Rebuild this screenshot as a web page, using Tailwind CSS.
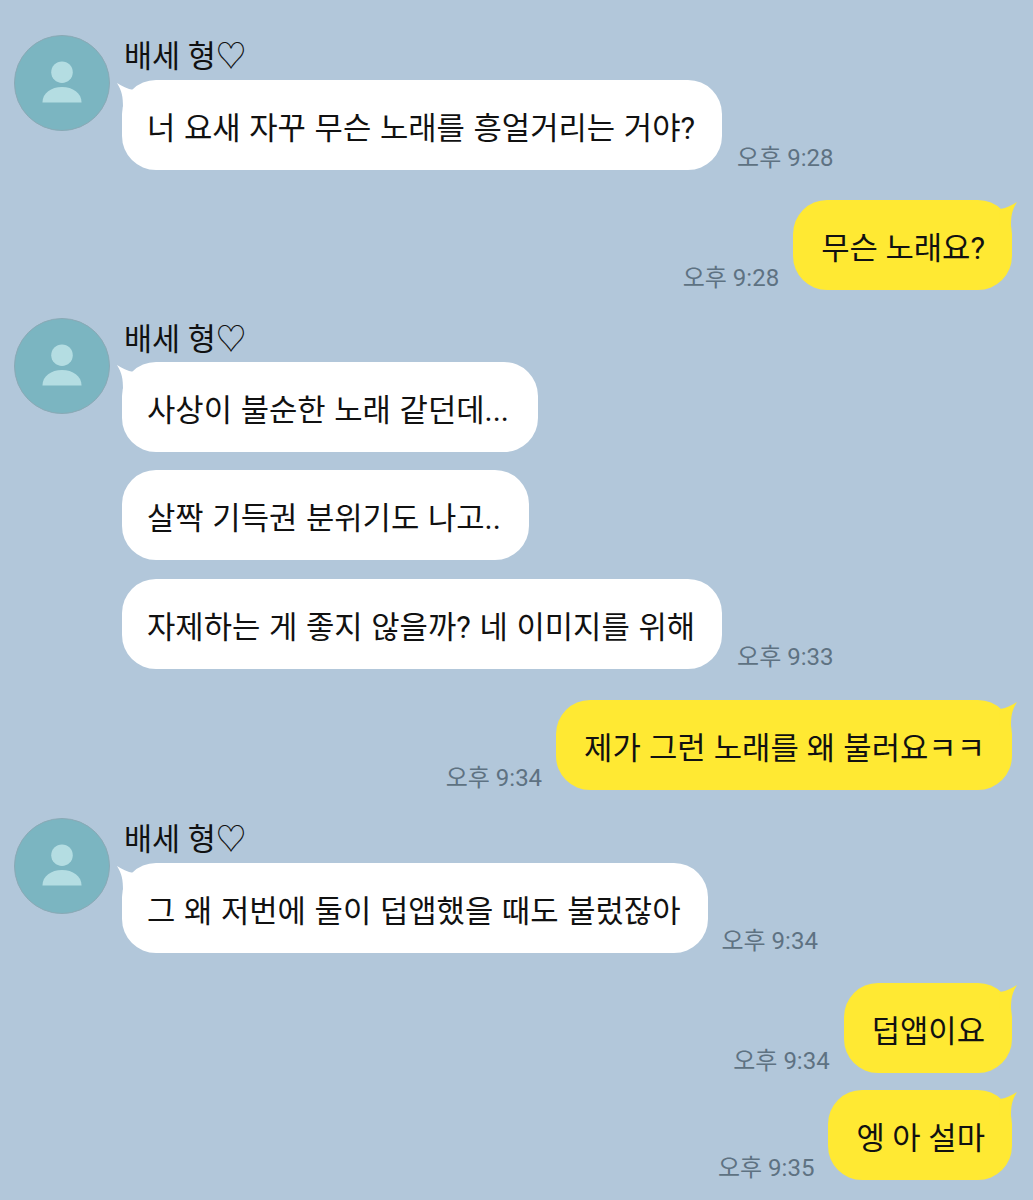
<!DOCTYPE html>
<html lang="ko">
<head>
  <meta charset="UTF-8">
  <meta name="viewport" content="width=device-width, initial-scale=1.0">
  <title>채팅</title>
  <script src="https://cdn.jsdelivr.net/npm/@tailwindcss/browser@4"></script>
</head>
<body class="bg-[#b2c7da] min-h-screen font-['Roboto','Noto_Sans_CJK_KR',sans-serif] text-[#111]">
  <main class="w-[1033px] h-[1200px] overflow-hidden pt-[35px] pl-[14px] pr-[21px]">

    <!-- 받은 메시지 1 -->
    <section class="flex gap-[12px]">
      <div class="w-[96px] h-[96px] rounded-full bg-[#7bb5c1] border border-[#8aa9b5] shrink-0">
        <svg viewBox="0 0 96 96" class="w-full h-full"><circle cx="48" cy="37" r="11" fill="#b4dde2"/><path d="M28 68c0-10 9-16 20-16s20 6 20 16z" fill="#b4dde2"/></svg>
      </div>
      <div class="flex flex-col items-start">
        <p class="h-[45px] pl-[2px] text-[30.5px] leading-[43px]">배세 형♡</p>
        <div class="flex items-end gap-[15px]">
          <div class="relative h-[90px] rounded-[34px] bg-white pt-[8px] pl-[25px] pr-[27px] flex items-center text-[30.8px] [word-spacing:1px] whitespace-nowrap">
            <svg viewBox="0 0 20 30" class="absolute -left-[5px] top-[3px] w-[20px] h-[30px]"><path d="M0 0c5 3 10 6 17 7L18 24H6C6 14 5 8 0 0z" fill="#fff"/></svg>
            <span class="relative">너 요새 자꾸 무슨 노래를 흥얼거리는 거야?</span>
          </div>
          <time class="text-[24px] leading-[24px] text-[#5e7282] whitespace-nowrap">오후 9:28</time>
        </div>
      </div>
    </section>

    <!-- 보낸 메시지 1 -->
    <section class="mt-[30px] flex justify-end items-end gap-[14px]">
      <time class="text-[24px] leading-[24px] text-[#5e7282] whitespace-nowrap">오후 9:28</time>
      <div class="relative h-[90px] rounded-[34px] bg-[#ffe933] pt-[9px] pl-[28px] pr-[27px] flex items-center text-[30.8px] whitespace-nowrap">
        <svg viewBox="0 0 20 30" class="absolute -right-[5px] top-[2px] w-[20px] h-[30px]"><path d="M20 0c-5 3-10 6-17 7L2 24h12C14 14 15 8 20 0z" fill="#ffe933"/></svg>
        <span class="relative">무슨 노래요?</span>
      </div>
    </section>

    <!-- 받은 메시지 2 -->
    <section class="mt-[28px] flex gap-[12px]">
      <div class="w-[96px] h-[96px] rounded-full bg-[#7bb5c1] border border-[#8aa9b5] shrink-0">
        <svg viewBox="0 0 96 96" class="w-full h-full"><circle cx="48" cy="37" r="11" fill="#b4dde2"/><path d="M28 68c0-10 9-16 20-16s20 6 20 16z" fill="#b4dde2"/></svg>
      </div>
      <div class="flex flex-col items-start">
        <p class="h-[44px] pl-[2px] text-[30.5px] leading-[43px]">배세 형♡</p>
        <div class="relative h-[90px] rounded-[34px] bg-white pt-[8px] pl-[25px] pr-[29px] flex items-center text-[30.8px] [word-spacing:1px] whitespace-nowrap">
          <svg viewBox="0 0 20 30" class="absolute -left-[5px] top-[3px] w-[20px] h-[30px]"><path d="M0 0c5 3 10 6 17 7L18 24H6C6 14 5 8 0 0z" fill="#fff"/></svg>
          <span class="relative">사상이 불순한 노래 같던데...</span>
        </div>
        <div class="mt-[18px] h-[90px] rounded-[34px] bg-white pt-[8px] pl-[25px] pr-[28px] flex items-center text-[30.8px] [word-spacing:1px] whitespace-nowrap">살짝 기득권 분위기도 나고..</div>
        <div class="mt-[19px] flex items-end gap-[15px]">
          <div class="h-[90px] rounded-[34px] bg-white pt-[8px] pl-[25px] pr-[27px] flex items-center text-[30.8px] [word-spacing:1px] whitespace-nowrap">자제하는 게 좋지 않을까? 네 이미지를 위해</div>
          <time class="text-[24px] leading-[24px] text-[#5e7282] whitespace-nowrap">오후 9:33</time>
        </div>
      </div>
    </section>

    <!-- 보낸 메시지 2 -->
    <section class="mt-[31px] flex justify-end items-end gap-[14px]">
      <time class="text-[24px] leading-[24px] text-[#5e7282] whitespace-nowrap">오후 9:34</time>
      <div class="relative h-[90px] rounded-[34px] bg-[#ffe933] pt-[9px] pl-[28px] pr-[27px] flex items-center text-[30.8px] [word-spacing:0.5px] whitespace-nowrap">
        <svg viewBox="0 0 20 30" class="absolute -right-[5px] top-[2px] w-[20px] h-[30px]"><path d="M20 0c-5 3-10 6-17 7L2 24h12C14 14 15 8 20 0z" fill="#ffe933"/></svg>
        <span class="relative">제가 그런 노래를 왜 불러요ㅋㅋ</span>
      </div>
    </section>

    <!-- 받은 메시지 3 -->
    <section class="mt-[28px] flex gap-[12px]">
      <div class="w-[96px] h-[96px] rounded-full bg-[#7bb5c1] border border-[#8aa9b5] shrink-0">
        <svg viewBox="0 0 96 96" class="w-full h-full"><circle cx="48" cy="37" r="11" fill="#b4dde2"/><path d="M28 68c0-10 9-16 20-16s20 6 20 16z" fill="#b4dde2"/></svg>
      </div>
      <div class="flex flex-col items-start">
        <p class="h-[45px] pl-[2px] text-[30.5px] leading-[43px]">배세 형♡</p>
        <div class="flex items-end gap-[14px]">
          <div class="relative h-[90px] rounded-[34px] bg-white pt-[8px] pl-[25px] pr-[27px] flex items-center text-[30.8px] [word-spacing:1px] whitespace-nowrap">
            <svg viewBox="0 0 20 30" class="absolute -left-[5px] top-[3px] w-[20px] h-[30px]"><path d="M0 0c5 3 10 6 17 7L18 24H6C6 14 5 8 0 0z" fill="#fff"/></svg>
            <span class="relative">그 왜 저번에 둘이 덥앱했을 때도 불렀잖아</span>
          </div>
          <time class="text-[24px] leading-[24px] text-[#5e7282] whitespace-nowrap">오후 9:34</time>
        </div>
      </div>
    </section>

    <!-- 보낸 메시지 3 -->
    <section class="mt-[30px] flex justify-end items-end gap-[14px]">
      <time class="text-[24px] leading-[24px] text-[#5e7282] whitespace-nowrap">오후 9:34</time>
      <div class="relative h-[90px] rounded-[34px] bg-[#ffe933] pt-[9px] pl-[28px] pr-[27px] flex items-center text-[30.8px] whitespace-nowrap">
        <svg viewBox="0 0 20 30" class="absolute -right-[5px] top-[2px] w-[20px] h-[30px]"><path d="M20 0c-5 3-10 6-17 7L2 24h12C14 14 15 8 20 0z" fill="#ffe933"/></svg>
        <span class="relative">덥앱이요</span>
      </div>
    </section>
    <section class="mt-[17px] flex justify-end items-end gap-[14px]">
      <time class="text-[24px] leading-[24px] text-[#5e7282] whitespace-nowrap">오후 9:35</time>
      <div class="relative h-[90px] rounded-[34px] bg-[#ffe933] pt-[9px] pl-[28px] pr-[27px] flex items-center text-[30.8px] whitespace-nowrap">
        <svg viewBox="0 0 20 30" class="absolute -right-[5px] top-[2px] w-[20px] h-[30px]"><path d="M20 0c-5 3-10 6-17 7L2 24h12C14 14 15 8 20 0z" fill="#ffe933"/></svg>
        <span class="relative">엥 아 설마</span>
      </div>
    </section>
  </main>
</body>
</html>
